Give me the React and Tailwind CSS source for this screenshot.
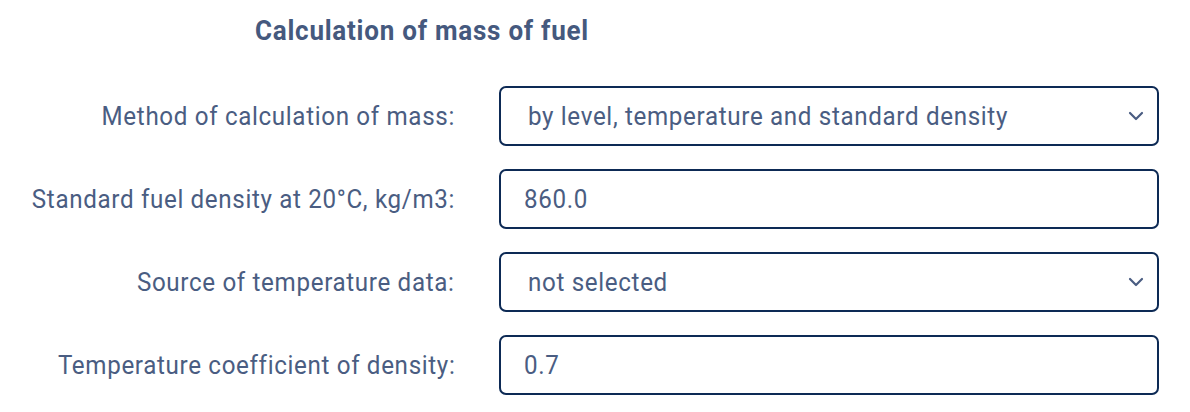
import React from "react";

const font = { fontFamily: "Roboto, 'Liberation Sans', sans-serif" };

function Chevron() {
  return (
    <svg width="16" height="10" viewBox="0 0 16 10" className="shrink-0">
      <path d="M2 2 L8 8 L14 2" fill="none" stroke="#4a5d82" strokeWidth="2.2" strokeLinecap="round" strokeLinejoin="round" />
    </svg>
  );
}

function Label({ children }) {
  return (
    <div className="w-[455px] shrink-0 flex justify-end">
      <span className="inline-block origin-right scale-x-[0.93] tracking-[0.7px] whitespace-nowrap text-[26px] leading-[32px] text-[#4a5d82]">{children}</span>
    </div>
  );
}

function Field({ value, select }) {
  return (
    <div className={`w-[660px] h-[60px] border-2 border-[#0d2a55] rounded-[7px] flex items-center justify-between ${select ? "pl-[27px] pr-[13px]" : "pl-[23px]"}`}>
      <span className="inline-block origin-left scale-x-[0.93] tracking-[0.7px] whitespace-nowrap text-[26px] leading-[32px] text-[#4a5d82]">{value}</span>
      {select && <Chevron />}
    </div>
  );
}

function Row({ label, value, select }) {
  return (
    <div className="flex items-center gap-[44px]">
      <Label>{label}</Label>
      <Field value={value} select={select} />
    </div>
  );
}

export default function App() {
  return (
    <div className="w-[1190px] h-[412px] bg-white pt-[12px]" style={font}>
      <div className="pl-[255px] h-[37px] flex items-center">
        <span className="inline-block origin-left scale-x-[0.93] tracking-[0.8px] whitespace-nowrap text-[28px] leading-[34px] font-bold text-[#45597e]">Calculation of mass of fuel</span>
      </div>
      <div className="mt-[37px] flex flex-col gap-[23px]">
        <Row label="Method of calculation of mass:" value="by level, temperature and standard density" select />
        <Row label="Standard fuel density at 20°C, kg/m3:" value="860.0" />
        <Row label="Source of temperature data:" value="not selected" select />
        <Row label="Temperature coefficient of density:" value="0.7" />
      </div>
    </div>
  );
}
